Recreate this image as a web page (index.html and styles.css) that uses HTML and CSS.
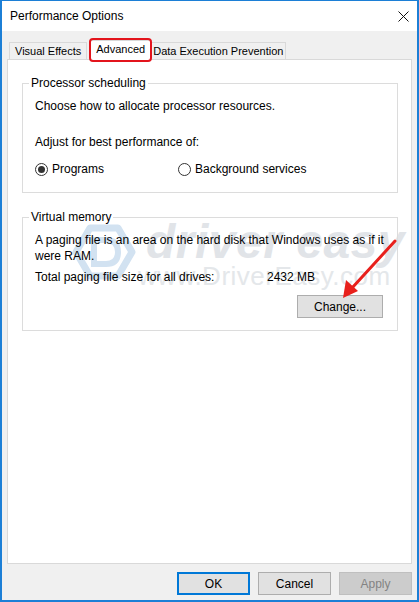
FILE: index.html
```html
<!DOCTYPE html>
<html lang="en">
<head>
	<meta charset="UTF-8">
	<title>Performance Options</title>
	<link rel="stylesheet" href="styles.css">
</head>
<body>
	<div class="window">
		<div class="titlebar">
			<span class="title">Performance Options</span>
			<svg class="close" width="11" height="11" viewBox="0 0 11 11">
				<path d="M0.5 0.5 L10.5 10.5 M10.5 0.5 L0.5 10.5" stroke="#111" stroke-width="1"/>
			</svg>
		</div>
		<div class="tabs">
			<span class="tab">Visual Effects</span>
			<span class="tab active">Advanced</span>
			<span class="tab">Data Execution Prevention</span>
		</div>
		<div class="panel">
			<div class="watermark">
				<svg class="logo" width="64" height="56" viewBox="0 0 64 56">
					<path d="M18 4 L46 4 L60 28 L46 52 L18 52 L4 28 Z" fill="none" stroke="#d2e2f1" stroke-width="7" stroke-linejoin="round"/>
					<path d="M22 16 L34 16 Q46 16 46 28 Q46 40 34 40 L22 40 Z" fill="none" stroke="#d2e2f1" stroke-width="6"/>
				</svg>
				<div class="wm-text">
					<span class="wm-big">driver easy</span>
					<span class="wm-small">www.DriverEasy.com</span>
				</div>
			</div>
			<fieldset class="group first">
				<legend>Processor scheduling</legend>
				<p class="line choose">Choose how to allocate processor resources.</p>
				<p class="line adjust">Adjust for best performance of:</p>
				<div class="radios">
					<label class="radio"><span class="dot checked"></span>Programs</label>
					<label class="radio"><span class="dot"></span>Background services</label>
				</div>
			</fieldset>
			<fieldset class="group second">
				<legend>Virtual memory</legend>
				<p class="line paging">A paging file is an area on the hard disk that Windows uses as if it were RAM.</p>
				<div class="line total">
					<span class="total-label">Total paging file size for all drives:</span>
					<span>2432 MB</span>
				</div>
				<div class="change-row">
					<span class="btn change">Change...</span>
				</div>
			</fieldset>
		</div>
		<div class="buttons">
			<span class="btn default">OK</span>
			<span class="btn">Cancel</span>
			<span class="btn disabled">Apply</span>
		</div>
		<svg class="arrow" width="419" height="602" viewBox="0 0 419 602">
			<path d="M395 241 L352 288" stroke="#e8201c" stroke-width="3" stroke-linecap="round"/>
			<path d="M343 298 L346 280 L358 291 Z" fill="#e8201c"/>
		</svg>
	</div>
</body>
</html>
```

FILE: styles.css
```css
* {margin: 0;padding: 0;box-sizing: border-box;}
body {background: #fff;font-family: "Liberation Sans", Arial, sans-serif;font-size: 12px;color: #000;}
.window {position: relative;display: flex;flex-direction: column;width: 419px;height: 602px;background: #f0f0f0;border: 2px solid #1c7fd6;border-top-width: 1px;}
.titlebar {display: flex;align-items: center;justify-content: space-between;height: 30px;padding: 0 8px 0 8px;background: #fff;}
.title {font-size: 12px;}
.close {margin-top: 1px;}
.tabs {display: flex;align-items: flex-end;height: 28px;padding-left: 7px;font-size: 11px;}
.tab {height: 18px;margin-bottom: -1px;padding: 0 5px;line-height: 16px;border: 1px solid #d9d9d9;border-bottom: none;background: #f0f0f0;white-space: nowrap;}
.tab + .tab {margin-left: -1px;}
.tab.active {position: relative;z-index: 2;height: 20px;margin: 0 -1px -1px 3px;padding: 0 5px;background: #fff;line-height: 17px;}
.tab.active::after {content: "";position: absolute;left: -2px;top: -3px;right: -2px;bottom: -2px;border: 2.5px solid #e3141c;border-radius: 4px;}
.tab.active + .tab {margin-left: 0;padding: 0 2px;}
.panel {position: relative;z-index: 1;flex: 1;margin: 0 5px;padding: 15px 13px 0 14px;background: #fff;border: 1px solid #d9d9d9;}
.watermark {position: absolute;left: 64px;top: 158px;display: flex;align-items: flex-start;gap: 10px;white-space: nowrap;pointer-events: none;}
.logo {margin-top: 6px;}
.wm-text {display: flex;flex-direction: column;}
.wm-big {font-family: "Liberation Sans", sans-serif;font-size: 48px;font-weight: bold;font-style: italic;line-height: 48px;color: #e1e4e8;letter-spacing: 0.5px;}
.wm-small {margin-top: -4px;margin-left: -8px;font-family: "Liberation Sans", sans-serif;font-size: 26px;line-height: 28px;color: #e4e7ea;letter-spacing: 0.5px;}
.group {position: relative;padding: 0 13px 0 12px;border: 1px solid #dcdcdc;}
.group legend {margin-left: -6px;padding: 0 2px;line-height: 16px;}
.group.second {margin-top: 16px;}
.line {line-height: 16px;}
.choose {margin-top: 7px;}
.adjust {margin-top: 20px;}
.radios {display: flex;margin-top: 11px;margin-bottom: 15px;}
.radio {display: flex;align-items: center;height: 16px;}
.radio:first-child {width: 143px;}
.dot {position: relative;width: 13px;height: 13px;margin-right: 4px;border: 1px solid #333;border-radius: 50%;background: #fff;}
.dot.checked::after {content: "";position: absolute;left: 2px;top: 2px;width: 7px;height: 7px;border-radius: 50%;background: #333;}
.paging {margin-top: 7px;}
.total {display: flex;margin-top: 5px;}
.total-label {width: 232px;}
.change-row {display: flex;justify-content: flex-end;margin-top: 10px;margin-bottom: 12px;padding-right: 1px;}
.btn {display: flex;align-items: center;justify-content: center;width: 73px;height: 23px;border: 1px solid #adadad;background: #e1e1e1;}
.btn.change {width: 86px;}
.buttons {display: flex;justify-content: flex-end;gap: 8px;margin: 8px 5px 5px 0;}
.btn.default {border-color: #0078d7;box-shadow: inset 0 0 0 1px #0078d7;}
.btn.disabled {border-color: #bfbfbf;background: #cccccc;color: #838383;}
.arrow {position: absolute;left: -2px;top: -1px;z-index: 3;pointer-events: none;}
```
